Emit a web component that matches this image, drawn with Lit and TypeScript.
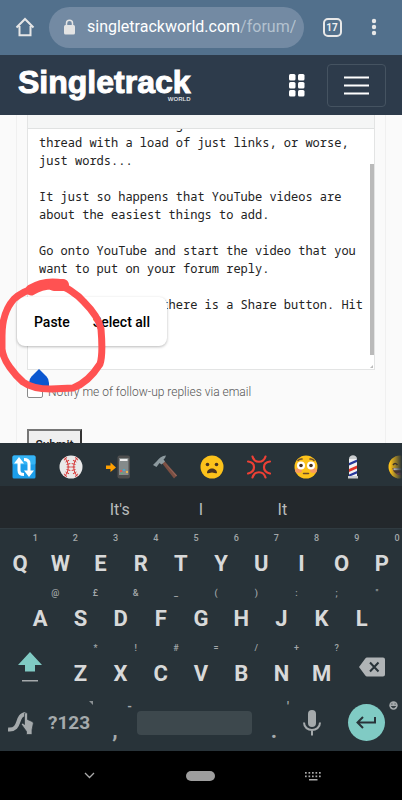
import { LitElement, html, css, svg } from "lit";
import { customElement } from "lit/decorators.js";

const NOTE = [
  "It is so much less good to see a",
  "thread with a load of just links, or worse,",
  "just words...",
  "",
  "It just so happens that YouTube videos are",
  "about the easiest things to add.",
  "",
  "Go onto YouTube and start the video that you",
  "want to put on your forum reply.",
  "",
  "Below your video there is a Share button. Hit",
  "",
  "",
  "",
  "",
  "",
].join("\n");

@customElement("browser-bar")
class BrowserBar extends LitElement {
  static styles = css`
    :host { display: flex; align-items: center; height: 55px; flex: none; background: #52708c; font-family: Roboto, sans-serif; box-sizing: border-box; padding: 0 18px 1px 12px; }
    button { border: 0; background: none; padding: 0; font: inherit; color: inherit; display: flex; align-items: center; justify-content: center; flex: none; }
    .home { width: 25px; height: 40px; }
    .url { flex: 1; min-width: 0; height: 41px; margin: 0 11px 0 12px; border-radius: 21px; background: #738aa3; justify-content: flex-start; padding: 0 8px 0 14px; gap: 11px; }
    .lock { flex: none; }
    .address { flex: 1; min-width: 0; overflow: hidden; white-space: nowrap; text-align: left; font-size: 16px; line-height: 24px; color: #fff; }
    .path { color: #b4c2cf; }
    .tabs { width: 34px; height: 40px; margin-right: 15px; }
    .count { box-sizing: border-box; width: 19px; height: 19px; border: 2px solid #e8e8e8; border-radius: 5px; color: #f0f0f0; font-size: 10px; font-weight: 700; line-height: 15px; text-align: center; }
    .more { width: 20px; height: 40px; }
  `;
  render() {
    return html`
      <button class="home" aria-label="Home">
        <svg width="20" height="20" viewBox="0 0 20 20" fill="none" stroke="#e6e6e6" stroke-width="2"><path d="M1.5 10.5 10 2l8.500 8.500M4.500 9v9.200h11V9" /></svg>
      </button>
      <button class="url">
        <svg class="lock" width="13" height="16" viewBox="0 0 13 16"><rect x="1" y="6" width="11" height="9.500" rx="1.500" fill="#e4e4e4" /><path d="M3.500 7V4.300a3 3 0 0 1 6 0V7" fill="none" stroke="#e4e4e4" stroke-width="1.500" /></svg>
        <span class="address">singletrackworld.com<span class="path">/forum/</span></span>
      </button>
      <button class="tabs" aria-label="Open tabs"><span class="count">17</span></button>
      <button class="more" aria-label="More">
        <svg width="6" height="18" viewBox="0 0 6 18" fill="#e8e8e8"><circle cx="3" cy="3" r="2.200" /><circle cx="3" cy="9" r="2.200" /><circle cx="3" cy="15" r="2.200" /></svg>
      </button>
    `;
  }
}

@customElement("site-header")
class SiteHeader extends LitElement {
  static styles = css`
    :host { display: flex; align-items: center; height: 60px; flex: none; box-sizing: border-box; padding: 0 16px 0 18px; background: #2d3b4b; }
    .logo { display: flex; flex-direction: column; color: #fff; text-decoration: none; margin-right: auto; padding-bottom: 4px; }
    .name { font: 700 32px/36px "Liberation Sans", sans-serif; -webkit-text-stroke: 1px #fff; }
    .world { font: 700 6px/6px "Liberation Sans", sans-serif; text-align: right; margin-top: -4px; color: #d6dade; }
    button { background: none; padding: 0; color: #fff; display: flex; align-items: center; justify-content: center; }
    .apps { border: 0; width: 30px; height: 42px; margin-right: 15px; }
    .menu { width: 59px; height: 43px; border: 1px solid #455361; border-radius: 4px; }
  `;
  render() {
    return html`
      <a class="logo" href="#"><span class="name">Singletrack</span><span class="world">WORLD</span></a>
      <button class="apps" aria-label="Apps">
        <svg width="16" height="23" viewBox="0 0 16 23" fill="#fff">
          ${[0, 8, 16].map((y) => svg`<rect x="0" y=${y} width="6.500" height="6.500" rx="1.500" /><rect x="9" y=${y} width="6.500" height="6.500" rx="1.500" />`)}
        </svg>
      </button>
      <button class="menu" aria-label="Menu">
        <svg width="25" height="19" viewBox="0 0 25 19" stroke="#fff" stroke-width="2"><path d="M0 1.500h25M0 9.500h25M0 17.500h25" /></svg>
      </button>
    `;
  }
}

@customElement("reply-form")
class ReplyForm extends LitElement {
  static styles = css`
    :host { display: block; position: relative; flex: 1; min-height: 0; overflow: hidden; background: #fafafa; padding: 0 16px; font-family: Roboto, sans-serif; }
    .card { border: 1px solid #f0f0f0; border-width: 0 1px; padding: 0 10px; min-height: 100%; }
    .editor { position: relative; border: 1px solid #e3e4e4; border-top: 0; }
    .tools { height: 13px; background: #f5f6f6; border-bottom: 1px solid #e0e2e2; }
    textarea { display: block; box-sizing: border-box; width: 100%; height: 240px; border: 0; margin: 0; padding: 0 0 0 11px; resize: none; overflow: hidden; outline: 0; background: #fff; color: #222; white-space: pre; font: 12px/18px "Noto Sans Mono", "DejaVu Sans Mono", monospace; }
    .thumb { position: absolute; right: 0; top: 49px; width: 4px; height: 191px; background: #bababa; }
    .grip { position: absolute; right: 1px; bottom: 1px; }
    .notify { display: flex; align-items: center; gap: 5px; height: 18px; margin-top: 13px; font-size: 12px; line-height: 18px; font-weight: 300; color: #555; }
    .notify input { appearance: none; box-sizing: border-box; width: 16px; height: 15px; margin: 0; border: 1px solid #8a8a8a; border-radius: 2px; background: #fff; margin-top: -3px; }
    .submit { display: block; margin-top: 28px; width: 55px; height: 30px; padding: 2px 0 0; background: #efefef; border: 2px solid; border-color: #767676 #333 #333 #767676; font: 500 12px/14px Roboto, sans-serif; color: #222; }
    .popover { position: absolute; left: 17px; top: 182px; display: flex; align-items: center; height: 49px; padding: 0 17px; gap: 23px; border-radius: 8px; background: #fff; box-shadow: 0 1px 3px rgba(0, 0, 0, 0.28); }
    .popover button { border: 0; padding: 0; background: none; font: 500 14px/20px Roboto, sans-serif; color: #000; }
    .marks { position: absolute; left: 0; top: 0; pointer-events: none; }
  `;
  firstUpdated() {
    this.renderRoot.querySelector("textarea")!.scrollTop = 13;
  }
  render() {
    return html`
      <div class="card">
        <div class="editor">
          <div class="tools"></div>
          <textarea aria-label="Reply" .value=${NOTE}></textarea>
          <div class="thumb"></div>
          <svg class="grip" width="3" height="3" viewBox="0 0 3 3"><path d="M3 0v3H0z" fill="#bbb" /></svg>
        </div>
        <label class="notify"><input type="checkbox" />Notify me of follow-up replies via email</label>
        <button class="submit">Submit</button>
      </div>
      <div class="popover"><button>Paste</button><button>Select all</button></div>
      <svg class="marks" width="120" height="290" viewBox="0 0 120 290">
        <path d="M39 254 31.500 261.500Q29 264 29 268v5h20v-5q0-4-2.500-6.500z" fill="#0b57d0" />
        <g fill="none" stroke="#ff5252" stroke-linecap="round" stroke-linejoin="round">
          <path d="M62 171C45 168 25 174 14 184C4 195 2 209 2 221V234C3 246 15 260 23 267C31 273 40 274 51 274L73 273C84 269 93 260 100 249C103 240 102 226 101 214C99 204 90 193 84 187C78 180 74 178 68 174L62 171" stroke-width="7" />
          <path d="M31 175C42 168 53 168 63 170" stroke-width="11" />
          <path d="M54 170 63 170" stroke-width="12" />
        </g>
      </svg>
    `;
  }
}

const face = svg`<circle cx="12" cy="12" r="11.500" fill="#fcc21b" />`;
const EMOJI: [string, unknown][] = [
  ["Repeat", svg`<rect x=".5" y=".5" width="23" height="23" rx="1.500" fill="#1c9eea" /><rect x=".5" y=".5" width="23" height="9" rx="1.500" fill="#35b4f5" /><g fill="none" stroke="#fff" stroke-width="3"><path d="M7 6v9.500c0 2.500 2 4 5 4" /><path d="M17 18V8.500c0-2.500-2-4-5-4" /></g><path d="M7 2 12 8.500H2zM17 22 22 15.500H12z" fill="#fff" />`],
  ["Baseball", svg`<circle cx="12" cy="12" r="11.500" fill="#e9e9e9" /><g fill="none" stroke="#d63a3a"><path d="M5.500 2.500c5 5 5 14 0 19M18.500 2.500c-5 5-5 14 0 19" stroke-width="1" /><path d="M6 3.500c5 4.500 5 12.500 0 17M18 3.500c-5 4.500-5 12.500 0 17" stroke-width="4" stroke-dasharray="1 2" /></g>`],
  ["Phone with arrow", svg`<path d="M0 10.500h4.500V7.500L10 12.500 4.500 17v-3H0z" fill="#ffa000" /><rect x="11.500" y=".5" width="12.500" height="23" rx="2" fill="#4e4e4e" /><rect x="13" y="3" width="9.500" height="17" fill="#858b8b" /><path d="M14 4h7.500v2H14z" fill="#eee" /><path d="M14 15h2v2h-2z" fill="#e05c50" /><path d="M17 14h2v2h-2z" fill="#4ba8c8" /><path d="M20 16h2v2h-2z" fill="#e9b54c" /><path d="M15 18h2v1h-2z" fill="#5bb974" />`],
  ["Hammer", svg`<path d="M8.500 7.500 11 5.500 24 20.500 21 23.500z" fill="#7b4f42" /><path d="M10 6 24 20.500 23 21.500z" fill="#95655a" /><path d="M0 10 4 6C6 3 9 .5 13 .5L12 3 10.500 4.500 12 6.500 8.500 9.500 6.500 8 3.500 12z" fill="#8d9a9f" />`],
  ["Frowning face", svg`${face}<circle cx="7.500" cy="9.500" r="1.800" fill="#493320" /><circle cx="16.500" cy="9.500" r="1.800" fill="#493320" /><path d="M7 18c0-6 10-6 10 0 0 1-3-.5-5-.5S7 19 7 18z" fill="#493320" />`],
  ["Anger", svg`<g fill="none" stroke="#ee4035" stroke-width="2.200" stroke-linecap="round"><path d="M5.500 1.500c2 7 11 7 13 0M5.500 22.500c2-7 11-7 13 0M1 6.500c8 1 8 10 0 12M23 6.500c-8 1-8 10 0 12" /></g>`],
  ["Flushed face", svg`${face}<ellipse cx="4.500" cy="15.500" rx="3.500" ry="2.500" fill="#f79a5f" /><ellipse cx="19.500" cy="15.500" rx="3.500" ry="2.500" fill="#f79a5f" /><circle cx="7" cy="10.500" r="4" fill="#fff" /><circle cx="17" cy="10.500" r="4" fill="#fff" /><circle cx="7" cy="10.500" r="1.800" fill="#493320" /><circle cx="17" cy="10.500" r="1.800" fill="#493320" /><path d="M4 5.500q2-2 4-1.500M20 5.500q-2-2-4-1.500M9.500 18.500h5" fill="none" stroke="#6d4c2a" stroke-width="1.500" stroke-linecap="round" />`],
  ["Barber pole", svg`<path d="M8 4h8v17H8z" fill="#f2f2f2" /><path d="M8 8 16 4.500V7L8 10.500zM8 19.500 16 16v2.500L10 21H8z" fill="#26379b" /><path d="M8 14 16 10.500V13.500L8 17z" fill="#e5332a" /><path d="M8 4c0-5 8-5 8 0zM7 21h10v2.500H7z" fill="#c9ccce" />`],
  ["Grinning face", svg`${face}<path d="M5 10q2-3 4.500 0M14.500 10q2-3 4.500 0" fill="none" stroke="#493320" stroke-width="1.500" /><path d="M4.500 13h15c-1 9-14 9-15 0z" fill="#6d3b25" /><path d="M5.500 13.200h13v2h-13z" fill="#fff" /><path d="M8 19q4-3 8 0-4 2-8 0z" fill="#ef5a7a" />`],
];

type Key = [string, string];
const ROW_1: Key[] = [["Q", "1"], ["W", "2"], ["E", "3"], ["R", "4"], ["T", "5"], ["Y", "6"], ["U", "7"], ["I", "8"], ["O", "9"], ["P", "0"]];
const ROW_2: Key[] = [["A", "@"], ["S", "£"], ["D", "&"], ["F", "_"], ["G", "("], ["H", ")"], ["J", ":"], ["K", ";"], ["L", "\""]];
const ROW_3: Key[] = [["Z", "*"], ["X", "!"], ["C", "#"], ["V", "="], ["B", "/"], ["N", "+"], ["M", "?"]];

@customElement("touch-keyboard")
class TouchKeyboard extends LitElement {
  static styles = css`
    :host { display: block; flex: none; background: #283339; font-family: Roboto, sans-serif; color: #d8d9d9; overflow: hidden; }
    button { border: 0; background: none; padding: 0; margin: 0; color: inherit; font: inherit; min-width: 0; }
    svg { display: block; }
    .emoji { display: flex; height: 43px; align-items: center; padding: 5px 0 0 12px; gap: 23px; box-sizing: border-box; overflow: hidden; position: relative; }
    .emoji button { flex: none; }
    .fade { position: absolute; right: 0; top: 0; width: 12px; height: 43px; background: linear-gradient(to right, transparent, #283339); }
    .words { display: grid; grid-template-columns: repeat(3, 1fr); height: 43px; box-sizing: border-box; border-bottom: 1px solid #303b41; padding: 4px 79px 0; background: #23282c; font-size: 16px; color: #b9bbbc; }
    .row { display: grid; grid-template-columns: repeat(20, 1fr); height: 55px; }
    .key { grid-column: span 2; position: relative; font-size: 22px; font-weight: 700; line-height: 26px; padding-top: 15px; }
    .hint { position: absolute; right: 0; top: 3px; width: 10px; text-align: center; font-size: 9px; line-height: 12px; font-weight: 500; color: #a3a8aa; }
    .indent { grid-column: span 1; }
    .wide { grid-column: span 3; display: flex; align-items: center; justify-content: center; }
    .shift { padding-top: 2px; }
    .bottom { display: grid; grid-template-columns: 42px 54px 36px 1fr 32px 45px 68px; height: 57px; align-items: center; justify-items: center; color: #a5aaac; }
    .bottom > button { position: relative; height: 57px; width: 100%; display: flex; align-items: center; justify-content: center; }
    .symbols { font-size: 19px; font-weight: 700; }
    .bottom > .mark { font-size: 22px; font-weight: 700; padding: 16px 0 0 2px; }
    .bottom > .space { height: 24px; margin-left: 5px; width: calc(100% - 10px); border-radius: 4px; background: #3d484d; justify-self: start; }
    .bottom > .return { padding-right: 4px; }
    .enter { width: 37px; height: 37px; border-radius: 50%; background: #80cbc4; display: flex; align-items: center; justify-content: center; }
    .corner { position: absolute; right: 4px; top: 7px; }
    .tick { position: absolute; right: 0; top: 7px; font-size: 12px; line-height: 12px; }
    .arrow { position: absolute; right: 3px; top: 7px; }
  `;
  private key([letter, hint]: Key) {
    return html`<button class="key">${letter}<span class="hint">${hint}</span></button>`;
  }
  render() {
    return html`
      <div class="emoji">
        ${EMOJI.map(([name, art]) => html`<button aria-label=${name}><svg width="24" height="24" viewBox="0 0 24 24">${art}</svg></button>`)}
        <div class="fade"></div>
      </div>
      <div class="words"><button>It's</button><button>I</button><button>It</button></div>
      <div class="row">${ROW_1.map((k) => this.key(k))}</div>
      <div class="row"><span class="indent"></span>${ROW_2.map((k) => this.key(k))}</div>
      <div class="row">
        <button class="wide shift" aria-label="Shift">
          <svg width="24" height="31" viewBox="0 0 24 31"><path d="M12 0 24 13h-7v6.500H7V13H0z" fill="#80cbc4" /><path d="M4 28h16v1.500H4z" fill="#a5aaac" /></svg>
        </button>
        ${ROW_3.map((k) => this.key(k))}
        <button class="wide" aria-label="Delete">
          <svg width="26" height="20" viewBox="0 0 26 20"><path d="M8 .5h16a2 2 0 0 1 2 2v15a2 2 0 0 1-2 2H8Q7 19.500 6.300 18.500L0 10 6.300 1.500Q7 .5 8 .5z" fill="#b0b4b6" /><path d="m11 5.500 8.500 9m0-9-8.500 9" stroke="#283339" stroke-width="2" /></svg>
        </button>
      </div>
      <div class="bottom">
        <button aria-label="Glide typing">
          <svg width="26" height="24" viewBox="0 0 26 24"><path d="M0 18.500C14 20 7 3.500 18 3" fill="none" stroke="#a5aaac" stroke-width="4" /><path d="M16.500 3a1.500 1.500 0 0 1 3 0V8.500l4.500 2q1.500.5 1.300 2L24 19v4.500h-5.500V20.500L13.500 13.500l1-1.500 2 1.500z" fill="#a5aaac" stroke="#283339" stroke-width=".7" /></svg>
        </button>
        <button class="symbols">?123<svg class="arrow" width="4" height="4" viewBox="0 0 4 4"><path d="M0 0h4v4z" fill="#8a9093" /></svg></button>
        <button class="mark">,<span class="tick">-</span></button>
        <button class="space" aria-label="Space"></button>
        <button class="mark">.<span class="tick">'</span></button>
        <button aria-label="Voice input">
          <svg width="18" height="26" viewBox="0 0 18 26"><rect x="5" y="0" width="8" height="17" rx="4" fill="#a5aaac" /><path d="M1 12.500c0 10 16 10 16 0M9 20v5.500" fill="none" stroke="#a5aaac" stroke-width="2" /></svg>
        </button>
        <button class="return" aria-label="Enter"><span class="enter"><svg width="20" height="13" viewBox="0 0 20 13" fill="none" stroke="#283339" stroke-width="2"><path d="M19 1v5.500H2M7 1 1.500 6.500 7 12" /></svg></span>
          <svg class="corner" width="9" height="9" viewBox="0 0 9 9"><circle cx="4.500" cy="4.500" r="4.200" fill="#a5aaac" /><path d="M2.300 3h1.200M5.500 3h1.200M2.300 5.500q2.200 2.500 4.400 0z" stroke="#283339" fill="#283339" stroke-width=".8" /></svg>
        </button>
      </div>
    `;
  }
}

@customElement("system-nav")
class SystemNav extends LitElement {
  static styles = css`
    :host { display: grid; grid-template-columns: 3fr 1fr 3fr; align-items: center; height: 49px; flex: none; background: #000; }
    button { border: 0; background: none; padding: 0; height: 49px; display: flex; align-items: center; justify-content: center; }
    .pill { width: 29px; height: 10px; border-radius: 5px; background: #9e9e9e; flex: none; }
    .back { padding-left: 6px; }
    .keys { padding-right: 6px; }
  `;
  render() {
    return html`
      <button class="back" aria-label="Hide keyboard"><svg width="11" height="7" viewBox="0 0 11 7"><path d="m1 1 4.500 4.500L10 1" fill="none" stroke="#aaa" stroke-width="1.300" /></svg></button>
      <button aria-label="Home"><span class="pill"></span></button>
      <button class="keys" aria-label="Switch keyboard">
        <svg width="16" height="10" viewBox="0 0 16 10" fill="#aaa">
          ${[0, 1, 2, 3, 4].map((i) => svg`<rect x=${i * 3.5} y="1" width="1.700" height="1.700" /><rect x=${i * 3.5} y="4.500" width="1.700" height="1.700" />`)}
          <rect x="4" y="8" width="8.500" height="1.500" />
        </svg>
      </button>
    `;
  }
}

@customElement("app-root")
class AppRoot extends LitElement {
  static styles = css`
    :host { display: flex; flex-direction: column; height: 100vh; overflow: hidden; background: #000; }
  `;
  render() {
    return html`
      <browser-bar></browser-bar>
      <site-header></site-header>
      <reply-form></reply-form>
      <touch-keyboard></touch-keyboard>
      <system-nav></system-nav>
    `;
  }
}
